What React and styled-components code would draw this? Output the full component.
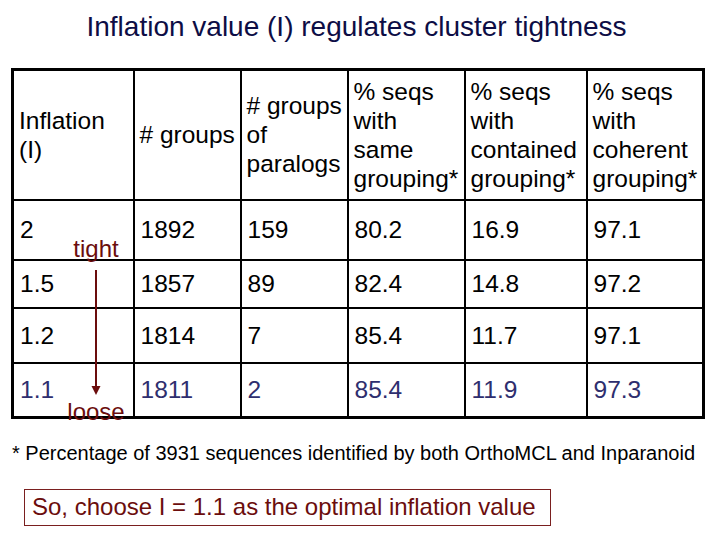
import React from "react";
import styled, { createGlobalStyle } from "styled-components";

const GlobalStyle = createGlobalStyle`
  html, body {
    margin: 0;
    padding: 0;
    background: #ffffff;
  }
  body {
    font-family: "Liberation Sans", Arial, sans-serif;
    color: #000000;
  }
`;

const Slide = styled.div`
  width: 720px;
  height: 540px;
  overflow: hidden;
  display: flex;
  flex-direction: column;
`;

const Title = styled.h1`
  margin: 0;
  width: 713px;
  padding-top: 11px;
  height: 68px;
  box-sizing: border-box;
  text-align: center;
  font-size: 28px;
  font-weight: normal;
  line-height: 32px;
  color: #0d0d45;
`;

const TableWrap = styled.div`
  position: relative;
  margin-left: 11px;
  width: 691px;
`;

const Grid = styled.table`
  border-collapse: collapse;
  width: 691px;
  table-layout: fixed;
  border: 3px solid #000;
  font-size: 24.5px;
  line-height: 29px;
`;

const Cell = styled.td`
  border: 2px solid #000;
  padding: 0 0 0 6px;
  vertical-align: middle;
  text-align: left;
  white-space: nowrap;
  color: ${(p) => (p.$chosen ? "#2e2e6e" : "#000")};
`;

const HeadCell = styled(Cell).attrs({ as: "th" })`
  font-weight: normal;
  padding-left: 5px;
`;

const Row = styled.tr`
  height: ${(p) => p.$h}px;
`;

const ArrowNote = styled.div`
  position: absolute;
  left: 55px;
  top: 169px;
  width: 60px;
  display: flex;
  flex-direction: column;
  align-items: center;
  color: #6b0d0d;
  font-size: 24px;
  line-height: 24px;
  pointer-events: none;
`;

const ArrowLabel = styled.span`
  display: block;
`;

const Footnote = styled.p`
  margin: 22px 0 0 12px;
  font-size: 20px;
  line-height: 24px;
`;

const Verdict = styled.div`
  margin: 24px 0 0 24px;
  align-self: flex-start;
  border: 1px solid #7a1f1f;
  padding: 3px 14px 4px 7px;
  font-size: 24px;
  line-height: 28px;
  color: #6b0d0d;
`;

const widths = [121, 107, 107, 117, 122, 117];

const headers = [
  ["Inflation", "(I)"],
  ["# groups"],
  ["# groups", "of", "paralogs"],
  ["% seqs", "with", "same", "grouping*"],
  ["% seqs", "with", "contained", "grouping*"],
  ["% seqs", "with", "coherent", "grouping*"],
];

const rows = [
  { h: 60, values: ["2", "1892", "159", "80.2", "16.9", "97.1"] },
  { h: 48, values: ["1.5", "1857", "89", "82.4", "14.8", "97.2"] },
  { h: 55, values: ["1.2", "1814", "7", "85.4", "11.7", "97.1"] },
  { h: 55, values: ["1.1", "1811", "2", "85.4", "11.9", "97.3"], chosen: true },
];

export default function App() {
  return (
    <>
      <GlobalStyle />
      <Slide>
        <Title>Inflation value (I) regulates cluster tightness</Title>
        <TableWrap>
          <Grid>
            <colgroup>
              {widths.map((w, i) => (
                <col key={i} style={{ width: w }} />
              ))}
            </colgroup>
            <thead>
              <Row $h={130}>
                {headers.map((lines, i) => (
                  <HeadCell key={i}>
                    {lines.map((l, j) => (
                      <div key={j}>{l}</div>
                    ))}
                  </HeadCell>
                ))}
              </Row>
            </thead>
            <tbody>
              {rows.map((r, i) => (
                <Row key={i} $h={r.h}>
                  {r.values.map((v, j) => (
                    <Cell key={j} $chosen={r.chosen}>
                      {v}
                    </Cell>
                  ))}
                </Row>
              ))}
            </tbody>
          </Grid>
          <ArrowNote>
            <ArrowLabel>tight</ArrowLabel>
            <svg width="12" height="139" viewBox="0 0 12 139">
              <line x1="6" y1="9" x2="6" y2="128" stroke="#6b0d0d" strokeWidth="2" />
              <path d="M1.5 125 L10.5 125 L6 134 Z" fill="#6b0d0d" />
            </svg>
            <ArrowLabel>loose</ArrowLabel>
          </ArrowNote>
        </TableWrap>
        <Footnote>* Percentage of 3931 sequences identified by both OrthoMCL and Inparanoid</Footnote>
        <Verdict>So, choose I = 1.1 as the optimal inflation value</Verdict>
      </Slide>
    </>
  );
}
